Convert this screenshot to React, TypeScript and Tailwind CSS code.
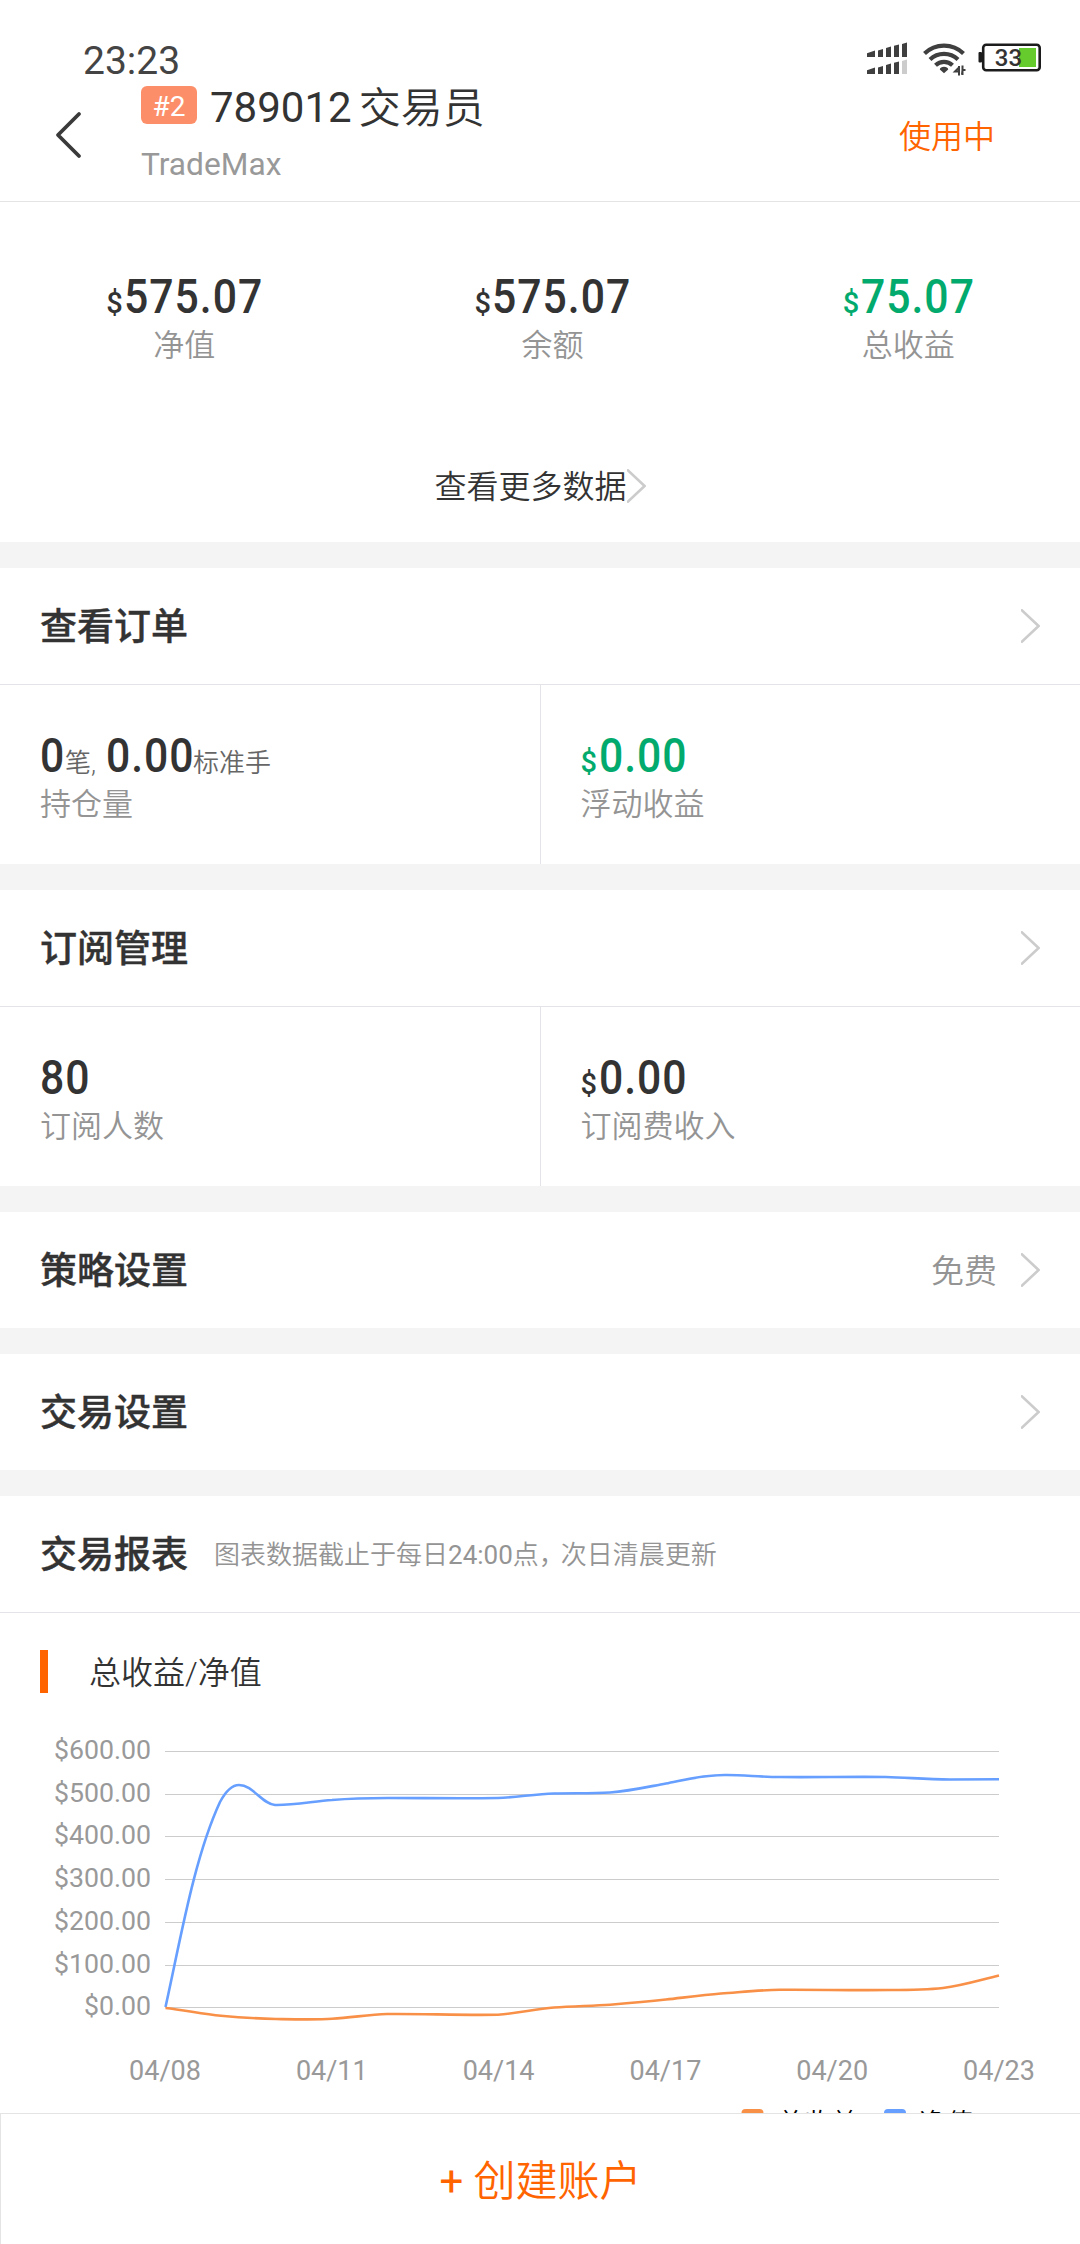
import type { ReactNode } from "react";

const yTicks = ["$600.00", "$500.00", "$400.00", "$300.00", "$200.00", "$100.00", "$0.00"];
const gridLines = [1751, 1794, 1836, 1879, 1922, 1965, 2007];
const xTicks = ["04/08", "04/11", "04/14", "04/17", "04/20", "04/23"];

function Chevron() {
  return (
    <svg width="19" height="34" viewBox="0 0 19 34" fill="none" className="block shrink-0">
      <path d="M0 0.5 L17.6 17 L0 33.5" stroke="#cccccc" strokeWidth="2.6" />
    </svg>
  );
}

// condensed digits: scaled glyphs inside a box of the scaled width
function Num({ width, children }: { width: string; children: ReactNode }) {
  return (
    <span className={`inline-block whitespace-nowrap ${width}`}>
      <span className="inline-block origin-left scale-x-[0.89] text-[48px] font-medium tracking-[1.1px]">
        {children}
      </span>
    </span>
  );
}

function Money({ value, width }: { value: string; width: string }) {
  return (
    <div className="flex h-[56px] items-baseline leading-[56px]">
      <span className="w-[18px] text-[29px] font-medium">$</span>
      <Num width={width}>{value}</Num>
    </div>
  );
}

function Stat({ value, width, label, green }: { value: string; width: string; label: string; green?: boolean }) {
  return (
    <div className="flex flex-col items-center">
      <div className={green ? "text-[#02aa6d]" : "text-[#333333]"}>
        <Money value={value} width={width} />
      </div>
      <div className="mt-px h-[40px] text-[31px] font-[350] leading-[40px] text-[#949494]">{label}</div>
    </div>
  );
}

function Cell({ label, green, children }: { label: string; green?: boolean; children: ReactNode }) {
  return (
    <div className="h-[179px] flex-1 pl-[40px] pt-[43px]">
      <div className={green ? "text-[#02aa6d]" : "text-[#333333]"}>{children}</div>
      <div className="mt-px h-[40px] text-[31px] font-[350] leading-[40px] text-[#949494]">{label}</div>
    </div>
  );
}

function Title({ children }: { children: ReactNode }) {
  return (
    <h2 className="pt-[4px] text-[37px] font-medium text-[#333333] [-webkit-text-stroke:0.4px_#333333]">
      {children}
    </h2>
  );
}

function SectionTitle({ title, extra }: { title: string; extra?: string }) {
  return (
    <div className="flex h-[116px] items-center justify-between pl-[40px] pr-[40px]">
      <Title>{title}</Title>
      <div className="flex items-center gap-[24px]">
        {extra && <span className="pt-[3px] text-[33px] font-[350] text-[#949494]">{extra}</span>}
        <Chevron />
      </div>
    </div>
  );
}

function Gap() {
  return <div className="h-[26px] shrink-0 bg-[#f4f4f4]" />;
}

function StatusIcons() {
  return (
    <svg width="180" height="36" viewBox="864 40 180 36" className="block">
      <g fill="#3f3f3f">
        <path d="M867 53.2l8-2.6V57h-8zM878 50.4l5-1.4V57h-5zM886 48l5-1.4V57h-5zM894 45.8l5-1.4V57h-5zM902 44l5-1.4V57h-5z" />
        <path d="M867 70.2l8-2.6V74h-8zM878 67.4l5-1.4V74h-5zM886 65l5-1.4V74h-5zM894 62.8l5-1.4V74h-5z" />
        <path d="M902 61l5-1.4V74h-5z" fill="#cccccc" />
        <path d="M944 73.2l-4.2-3.8c0-3.4 8.4-3.4 8.4 0z" />
      </g>
      <g fill="none" stroke="#3f3f3f" strokeWidth="4.2">
        <path d="M924.5 53.5a28 28 0 0 1 39 0" />
        <path d="M930 59.5a20.5 20.5 0 0 1 28 0" />
        <path d="M935.5 65.2a12.5 12.5 0 0 1 17 0" />
      </g>
      <path d="M959 66v9.5M959.5 67l-4.5 4.5h4M962.5 75v-9.5M962 74.5l0.5-4.5h3" stroke="#3f3f3f" strokeWidth="2" fill="none" />
      <rect x="983.2" y="44.7" width="56.5" height="25.6" rx="3" fill="#ffffff" stroke="#1c1c1c" strokeWidth="2.6" />
      <rect x="978.5" y="52" width="3.5" height="10.5" rx="1" fill="#1c1c1c" />
      <rect x="1019" y="48" width="17" height="19" fill="#66cb2c" />
      <text x="1008.5" y="66" textAnchor="middle" fontSize="24" fontWeight="500" fill="#333333" className="font-['Roboto',sans-serif]">33</text>
    </svg>
  );
}

function Chart() {
  return (
    <svg width="1080" height="420" viewBox="0 1693 1080 420" className="block font-['Roboto','Noto_Sans_CJK_SC',sans-serif]">
      {gridLines.map((y, i) => (
        <g key={y}>
          <rect x="165" y={y} width="834" height="1" fill="#cccccc" />
          <text x="151" y={y + 7.5} textAnchor="end" fontSize="26.7" fill="#999999">{yTicks[i]}</text>
        </g>
      ))}
      {xTicks.map((label, i) => (
        <text key={label} x={165 + i * 166.8} y="2079.5" textAnchor="middle" fontSize="27" fill="#999999">{label}</text>
      ))}
      <path
        d="M165.5 2007C180 1942 194 1858 220 1802C227 1789 233 1785 239 1785C253 1785 262 1804 275 1805C293 1805.5 315 1801 332 1800C350 1798.5 370 1798 388 1798C425 1798 462 1798.5 498 1798C516 1797.5 535 1794 554 1793.5C572 1793 592 1793.5 610 1792.5C630 1791 647 1787 666 1783.5C684 1780 703 1774.5 727 1775C745 1775 760 1777 780 1777C810 1777.5 852 1776.5 886 1777C908 1777.5 925 1779.5 950 1779.5L999 1779.3"
        fill="none" stroke="#669fff" strokeWidth="2.6"
      />
      <path
        d="M165.5 2008C184 2010 203 2014 221 2015.7C240 2017.5 258 2018.5 276 2019C295 2019.3 317 2019.8 332 2018.8C352 2017.8 368 2014.5 387 2014C420 2013.5 462 2015.5 498 2014.7C517 2013.5 535 2009 554 2007.5C572 2006 592 2006 610 2004.7C630 2003 647 2001.5 666 1999.5C684 1997.5 703 1995 721 1993.5C742 1992 760 1990 780 1989.8C815 1989.5 852 1990.5 890 1990C910 1990 925 1990 943 1988C963 1985.5 980 1980 999 1975.5"
        fill="none" stroke="#f99048" strokeWidth="2.6"
      />
      <rect x="741.5" y="2109" width="22" height="16" rx="4" fill="#f99048" />
      <text x="777" y="2133" fontSize="27" fontWeight="350" fill="#000000">总收益</text>
      <rect x="884" y="2109" width="22" height="16" rx="4" fill="#669fff" />
      <text x="919.5" y="2133" fontSize="27" fontWeight="350" fill="#000000">净值</text>
    </svg>
  );
}

export default function App() {
  return (
    <main className="flex h-[2244px] w-[1080px] flex-col overflow-hidden bg-white font-['Roboto','Noto_Sans_CJK_SC',sans-serif]">
      <header className="flex h-[202px] shrink-0 flex-col border-b border-[#e4e4e4]">
        <div className="flex h-[84px] shrink-0 items-end justify-between pl-[83px] pr-[36px]">
          <span className="h-[46px] text-[39px] leading-[46px] text-[#444444]">23:23</span>
          <div className="pb-[8px]"><StatusIcons /></div>
        </div>
        <div className="flex flex-1">
          <svg width="30" height="50" viewBox="0 0 30 50" fill="none" className="ml-[54px] mt-[26px] block">
            <path d="M25 4L4 25L25 46" stroke="#3a3a3a" strokeWidth="3.8" strokeLinecap="round" strokeLinejoin="round" />
          </svg>
          <div className="ml-[57px] flex flex-col">
            <div className="flex h-[48px]">
              <span className="mr-[13px] mt-[2px] flex h-[38px] w-[56px] items-center justify-center rounded-[6px] bg-[#fc8f6a] pt-[4px] text-[28px] leading-none text-white">#2</span>
              <h1 className="flex text-[42px] leading-[48px] text-[#333333]">
                <span>789012</span>
                <span className="ml-[7px] pt-px font-[350]">交易员</span>
              </h1>
            </div>
            <p className="mt-[13px] text-[31.7px] leading-[40px] text-[#999999]">TradeMax</p>
          </div>
          <span className="ml-auto mr-[85px] mt-[33px] h-[40px] text-[32px] font-[350] leading-[40px] text-[#ff6400]">使用中</span>
        </div>
      </header>

      <section className="flex h-[340px] shrink-0 flex-col">
        <div className="flex justify-around pt-[67px]">
          <Stat value="575.07" width="w-[138px]" label="净值" />
          <Stat value="575.07" width="w-[138px]" label="余额" />
          <Stat value="75.07" width="w-[113px]" label="总收益" green />
        </div>
        <div className="mt-[100px] flex h-[40px] items-center justify-center">
          <span className="pt-[2px] text-[32px] font-[350] leading-[40px] text-[#333333]">查看更多数据</span>
          <Chevron />
        </div>
      </section>

      <Gap />
      <section className="shrink-0">
        <SectionTitle title="查看订单" />
        <div className="flex divide-x divide-[#e3e3e8] border-t border-[#e3e3e8]">
          <Cell label="持仓量">
            <div className="flex h-[56px] items-baseline whitespace-nowrap leading-[56px]">
              <Num width="w-[25px]">0</Num>
              <span className="w-[41px] text-[26px] font-[350] text-[#666666]">笔,</span>
              <Num width="w-[87px]">0.00</Num>
              <span className="text-[26px] font-[350] text-[#666666]">标准手</span>
            </div>
          </Cell>
          <Cell label="浮动收益" green>
            <Money value="0.00" width="w-[88px]" />
          </Cell>
        </div>
      </section>

      <Gap />
      <section className="shrink-0">
        <SectionTitle title="订阅管理" />
        <div className="flex divide-x divide-[#e3e3e8] border-t border-[#e3e3e8]">
          <Cell label="订阅人数">
            <div className="h-[56px] leading-[56px]">
              <Num width="w-[50px]">80</Num>
            </div>
          </Cell>
          <Cell label="订阅费收入">
            <Money value="0.00" width="w-[88px]" />
          </Cell>
        </div>
      </section>

      <Gap />
      <section className="shrink-0">
        <SectionTitle title="策略设置" extra="免费" />
      </section>
      <Gap />
      <section className="shrink-0">
        <SectionTitle title="交易设置" />
      </section>
      <Gap />

      <section className="min-h-0 flex-1 overflow-hidden">
        <div className="flex h-[117px] items-center border-b border-[#e3e3e8] pl-[40px]">
          <Title>交易报表</Title>
          <p className="ml-[26px] pt-[3px] text-[26px] font-[350] text-[#949494]">
            图表数据截止于每日<span className="font-normal">24:00</span>点<span className="tracking-[-4px]">，</span>次日清晨更新
          </p>
        </div>
        <div className="flex h-[80px] items-end pl-[40px]">
          <div className="h-[43px] w-[8px] bg-[#ff6400]" />
          <h3 className="ml-[41px] h-[43px] pt-[2px] text-[32px] font-[350] leading-[43px] text-[#333333]">总收益/净值</h3>
        </div>
        <Chart />
      </section>

      <footer className="flex h-[131px] shrink-0 items-center justify-center gap-[10px] border-l border-t border-[#e4e4e4] bg-white pt-[5px] text-[42px] text-[#ff6400]">
        <span>+</span>
        <span className="font-[350]">创建账户</span>
      </footer>
    </main>
  );
}
